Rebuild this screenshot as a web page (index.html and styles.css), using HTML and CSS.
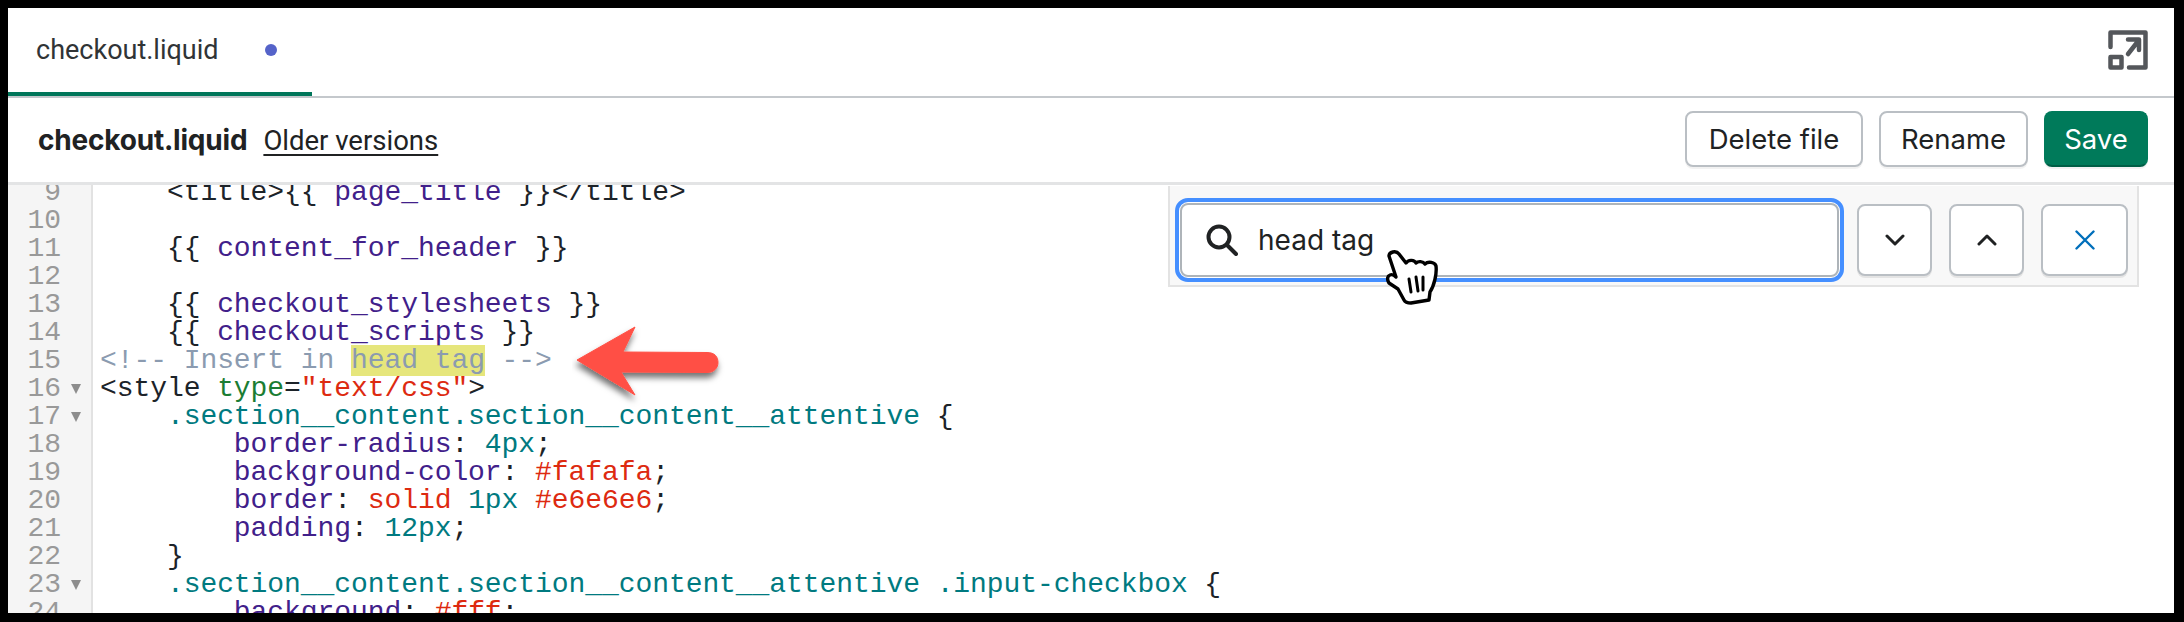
FILE: index.html
```html
<!DOCTYPE html>
<html lang="en">
<head>
<meta charset="utf-8">
<title>checkout.liquid</title>
<link rel="stylesheet" href="styles.css">
</head>
<body>
<div class="app">
  <header class="tabbar">
    <div class="tab"><span class="tab-name">checkout.liquid</span><span class="dot"></span></div>
    <svg class="expand" viewBox="0 0 40 40" width="40" height="40" fill="none" stroke="#54575b" stroke-width="4.5" stroke-linecap="round" stroke-linejoin="round">
      <path d="M2.5 17V2.5H37.5V37.5H21"/>
      <rect x="2.5" y="27" width="11" height="10.5"/>
      <path d="M20 24L31 10M20 9.5H31V20"/>
    </svg>
  </header>
  <div class="toolbar">
    <div class="file-info"><strong class="file-name">checkout.liquid</strong><a class="older">Older versions</a></div>
    <div class="actions">
      <button class="btn btn-delete">Delete file</button>
      <button class="btn btn-rename">Rename</button>
      <button class="btn btn-save">Save</button>
    </div>
  </div>
  <section class="editor">
    <div class="lines">
      <div class="row"><div class="gut"><span class="num">9</span></div><div class="code"><span class="t">    &lt;title&gt;{{ </span><span class="p">page_title</span><span class="t"> }}&lt;/title&gt;</span></div></div>
      <div class="row"><div class="gut"><span class="num">10</span></div><div class="code"></div></div>
      <div class="row"><div class="gut"><span class="num">11</span></div><div class="code"><span class="t">    {{ </span><span class="p">content_for_header</span><span class="t"> }}</span></div></div>
      <div class="row"><div class="gut"><span class="num">12</span></div><div class="code"></div></div>
      <div class="row"><div class="gut"><span class="num">13</span></div><div class="code"><span class="t">    {{ </span><span class="p">checkout_stylesheets</span><span class="t"> }}</span></div></div>
      <div class="row"><div class="gut"><span class="num">14</span></div><div class="code"><span class="t">    {{ </span><span class="p">checkout_scripts</span><span class="t"> }}</span></div></div>
      <div class="row"><div class="gut"><span class="num">15</span></div><div class="code"><span class="c">&lt;!-- Insert in <span class="hl">head tag</span> --&gt;</span></div></div>
      <div class="row"><div class="gut"><span class="num">16</span><span class="fold"></span></div><div class="code"><span class="t">&lt;style </span><span class="n">type</span><span class="t">=</span><span class="r">"text/css"</span><span class="t">&gt;</span></div></div>
      <div class="row"><div class="gut"><span class="num">17</span><span class="fold"></span></div><div class="code"><span class="g">    .section__content.section__content__attentive</span><span class="t"> {</span></div></div>
      <div class="row"><div class="gut"><span class="num">18</span></div><div class="code"><span class="p">        border-radius</span><span class="t">: </span><span class="g">4px</span><span class="t">;</span></div></div>
      <div class="row"><div class="gut"><span class="num">19</span></div><div class="code"><span class="p">        background-color</span><span class="t">: </span><span class="r">#fafafa</span><span class="t">;</span></div></div>
      <div class="row"><div class="gut"><span class="num">20</span></div><div class="code"><span class="p">        border</span><span class="t">: </span><span class="r">solid</span><span class="t"> </span><span class="g">1px</span><span class="t"> </span><span class="r">#e6e6e6</span><span class="t">;</span></div></div>
      <div class="row"><div class="gut"><span class="num">21</span></div><div class="code"><span class="p">        padding</span><span class="t">: </span><span class="g">12px</span><span class="t">;</span></div></div>
      <div class="row"><div class="gut"><span class="num">22</span></div><div class="code"><span class="t">    }</span></div></div>
      <div class="row"><div class="gut"><span class="num">23</span><span class="fold"></span></div><div class="code"><span class="g">    .section__content.section__content__attentive .input-checkbox</span><span class="t"> {</span></div></div>
      <div class="row"><div class="gut"><span class="num">24</span></div><div class="code"><span class="p">        background</span><span class="t">: </span><span class="r">#fff</span><span class="t">;</span></div></div>
    </div>

    <div class="search">
      <div class="search-ring">
        <div class="search-input">
          <svg class="search-icon" viewBox="0 0 32 32" width="32" height="32" fill="none" stroke="#202223" stroke-width="4" stroke-linecap="round">
            <circle cx="13" cy="13" r="10.5"/><path d="M21 21L30 30"/>
          </svg>
          <span class="search-text">head tag</span>
        </div>
      </div>
      <button class="sbtn"><svg viewBox="0 0 20 12" width="20" height="12" fill="none" stroke="#202223" stroke-width="3" stroke-linecap="round" stroke-linejoin="round"><path d="M2 2L10 10L18 2"/></svg></button>
      <button class="sbtn"><svg viewBox="0 0 20 12" width="20" height="12" fill="none" stroke="#202223" stroke-width="3" stroke-linecap="round" stroke-linejoin="round"><path d="M2 10L10 2L18 10"/></svg></button>
      <button class="sbtn sbtn-close"><svg viewBox="0 0 20 20" width="20" height="20" fill="none" stroke="#006fbb" stroke-width="2.4" stroke-linecap="round"><path d="M1.5 1.5L18.5 18.5M18.5 1.5L1.5 18.5"/></svg></button>
    </div>

    <svg class="arrow" viewBox="0 0 170 90" width="170" height="90">
      <defs><filter id="arrow-shadow" x="-20%" y="-30%" width="140%" height="170%"><feDropShadow dx="-1" dy="5" stdDeviation="3" flood-color="#000" flood-opacity=".55"/></filter></defs>
      <path d="M5 37L63 4L51 29L135 29.5C143 29.5 146 34 146 39.5C146 45 142 49.5 135 49.5L49 49L63 72Z" fill="#ff5045" stroke="#ff5045" stroke-width="1" stroke-linejoin="round" filter="url(#arrow-shadow)"/>
    </svg>

    <svg class="hand" viewBox="0 0 52 56" width="52" height="56" fill="#fff" stroke="#000" stroke-width="3.4" stroke-linejoin="round" stroke-linecap="round">
      <path d="M3 6C3 2 10 0 13 4L20 13C22 10 28 9 30 13C32 11 37 11 39 14C42 11 49 12 50 16C51 24 48 36 44 42L43 50L25 53C22 53 19 52 18 50L12 39L3 33C1 30 1 26 4 25C6 24 8 25 10 27Z"/>
      <path d="M23 29L25 42M30 27L32 41M37 27L37 40" fill="none" stroke-width="3"/>
    </svg>
  </section>
</div>
</body>
</html>
```
FILE: styles.css
```css
* { box-sizing: border-box; }
html, body { margin: 0; height: 100%; }
body { background: #000; padding: 8px 10px 9px 8px; overflow: hidden; }
.app { height: 605px; background: #fff; display: flex; flex-direction: column; overflow: hidden; font-family: "Roboto", sans-serif; color: #202223; }

.tabbar { height: 90px; display: flex; justify-content: space-between; align-items: center; border-bottom: 2px solid #c4c8cc; padding-right: 26px; flex: none; }
.tab { width: 304px; align-self: stretch; border-bottom: 4px solid #00765a; display: flex; align-items: center; padding-left: 28px; }
.tab-name { font-size: 27px; color: #303436; }
.dot { width: 12px; height: 12px; border-radius: 50%; background: #5563c9; margin-left: 46px; }
.expand { margin-bottom: 4px; }

.toolbar { height: 87px; flex: none; display: flex; justify-content: space-between; align-items: center; padding: 0 26px 3px 30px; border-bottom: 3px solid #e3e4e5; }
.file-info { display: flex; align-items: baseline; gap: 16px; padding-top: 2px; }
.file-name { font-family: "Inter", sans-serif; font-size: 28px; font-weight: 700; letter-spacing: -.2px; }
.older { font-size: 27.5px; text-decoration: underline; text-underline-offset: 4px; }
.actions { display: flex; gap: 16px; }
.btn { height: 56px; border-radius: 8px; border: 2px solid #babfc4; background: #fff; font-family: "Inter", sans-serif; font-size: 27.5px; color: #202223; padding: 0; box-shadow: 0 2px 0 rgba(0,0,0,.05); }
.btn-delete { width: 178px; }
.btn-rename { width: 149px; }
.btn-save { width: 104px; background: #007a5a; border-color: #007a5a; border-bottom-color: #005e46; color: #fff; }

.editor { position: relative; flex: 1; overflow: hidden; }
.lines { margin-top: -6px; font-family: "Liberation Mono", monospace; font-size: 28px; line-height: 28px; letter-spacing: -.07px; }
.row { display: flex; height: 28px; }
.gut { width: 85px; flex: none; background: #f5f5f5; border-right: 2px solid #e2e2e2; color: #999; display: flex; position: relative; }
.num { width: 53px; text-align: right; }
.fold { width: 0; height: 0; margin: 9px 0 0 10px; border-left: 5px solid transparent; border-right: 5px solid transparent; border-top: 10px solid #8d8d8d; }
.code { padding-left: 7px; white-space: pre; }
.t { color: #1c2329; }
.p { color: #41208a; }
.g { color: #007a80; }
.r { color: #dd2a10; }
.n { color: #1b7d33; }
.c { color: #8b9bb0; }
.hl { background: rgba(220,220,70,.71); }

.search { position: absolute; top: 1px; left: 1160px; width: 971px; height: 101px; background: #f8f8f8; border: 2px solid #e3e3e3; border-top: 0; display: flex; align-items: center; gap: 17px; padding: 9px 9px 0 5px; }
.search-ring { width: 669px; height: 84px; margin-right: -4px; border: 4px solid #458fff; border-radius: 13px; padding: 1px; background: #fff; flex: none; }
.search-input { height: 100%; border: 2px solid #aeb4b9; border-radius: 8px; background: #fff; display: flex; align-items: center; padding: 0 0 1px 24px; gap: 20px; }
.search-text { font-family: "Inter", sans-serif; font-size: 28px; color: #202223; }
.sbtn { width: 75px; height: 72px; flex: none; border: 2px solid #babfc4; border-radius: 8px; background: #fff; display: flex; align-items: center; justify-content: center; padding: 0; box-shadow: 0 2px 0 rgba(0,0,0,.08); }
.sbtn-close { width: 87px; }

.arrow { position: absolute; left: 564px; top: 138px; }
.hand { position: absolute; left: 1378px; top: 65px; }
```
